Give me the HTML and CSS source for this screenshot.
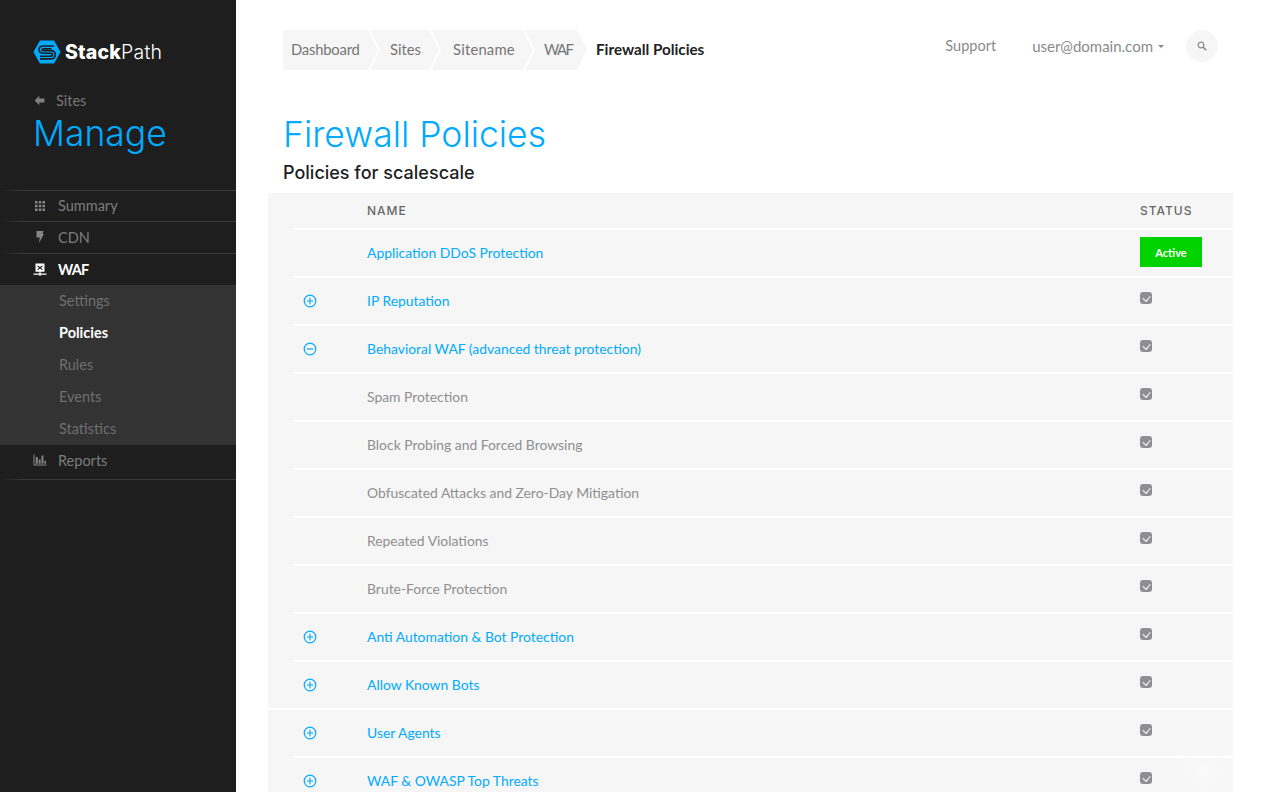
FILE: index.html
```html
<!DOCTYPE html>
<html lang="en">
<head>
<meta charset="utf-8">
<title>Firewall Policies</title>
<link rel="stylesheet" href="styles.css">
</head>
<body>
<aside class="sidebar">
  <div class="brand">
    <svg class="brand-mark" viewBox="0 0 28 24" width="28" height="24">
      <path d="M7 0.5H21L27.6 12L21 23.5H7L0.4 12Z" fill="#00aaff"/>
      <path d="M21 6H10.5C7.8 6 6 7.6 6 9.6S7.8 13.2 10.5 13.2H17.5C18.9 13.2 19.5 13.9 19.5 14.8S18.9 16.2 17.5 16.2H7" fill="none" stroke="#1e1e1e" stroke-width="1.6"/>
      <path d="M18.5 8.8H10.8C9.5 8.8 8.9 9.2 8.9 9.7S9.5 10.6 10.8 10.6H17.5C20.4 10.6 22.2 12.4 22.2 14.7S20.4 18.9 17.5 18.9H7" fill="none" stroke="#1e1e1e" stroke-width="1.6"/>
    </svg>
    <span class="brand-name"><b>Stack</b>Path</span>
  </div>
  <a class="back"><svg class="back-icon" viewBox="0 0 12 12" width="11" height="11"><path d="M5.8 0.8L0.6 6L5.8 11.2V8.2H11.4V3.8H5.8Z" fill="#808080"/></svg><span>Sites</span></a>
  <div class="section-title">Manage</div>
  <nav class="nav">
    <a class="nav-item first"><svg class="nav-icon small" viewBox="0 0 12 12" width="12" height="12"><path d="M1 1h2.5v2.5H1zM4.8 1h2.5v2.5H4.8zM8.5 1H11v2.5H8.5zM1 4.8h2.5v2.5H1zM4.8 4.8h2.5v2.5H4.8zM8.5 4.8H11v2.5H8.5zM1 8.5h2.5V11H1zM4.8 8.5h2.5V11H4.8zM8.5 8.5H11V11H8.5z" fill="#858585"/></svg><span>Summary</span></a>
    <a class="nav-item"><svg class="nav-icon small" viewBox="0 0 12 12" width="12" height="12"><path d="M2.5 0H9.5L8.5 3H10L5 12L5.8 6.5H2.5Z" fill="#858585"/></svg><span>CDN</span></a>
    <a class="nav-item active"><svg class="nav-icon" viewBox="0 0 14 14" width="14" height="14"><path fill-rule="evenodd" d="M2.5 0.5H11.5V8.8H7.6V10.6H13.5V11.7H8.2V12.6H5.8V11.7H0.5V10.6H6.4V8.8H2.5ZM5 2.4L4.2 3.2L6.1 4.7L4.2 6.2L5 7L7 5.4L9 7L9.8 6.2L7.9 4.7L9.8 3.2L9 2.4L7 4Z" fill="#fff"/></svg><span>WAF</span></a>
    <div class="subnav">
      <a class="sub-item">Settings</a>
      <a class="sub-item current">Policies</a>
      <a class="sub-item">Rules</a>
      <a class="sub-item">Events</a>
      <a class="sub-item">Statistics</a>
    </div>
    <a class="nav-item reports"><svg class="nav-icon" viewBox="0 0 14 12" width="14" height="12"><path d="M0.5 0.5H1.5V10.5H13.5V11.5H0.5ZM2.7 3H4.8V9.8H2.7ZM5.7 5.5H7.6V9.8H5.7ZM8.5 1.5H10.4V9.8H8.5ZM11.3 6.8H13V9.8H11.3Z" fill="#858585"/></svg><span>Reports</span></a>
  </nav>
</aside>
<main class="main">
  <header class="topbar">
    <ol class="crumbs">
      <li class="crumb first">Dashboard</li>
      <li class="crumb second">Sites</li>
      <li class="crumb third">Sitename</li>
      <li class="crumb fourth">WAF</li>
      <li class="crumb-current">Firewall Policies</li>
    </ol>
    <div class="top-links">
      <a class="top-link">Support</a>
      <a class="top-link user">user@domain.com<i class="caret"></i></a>
      <button class="search" type="button" aria-label="Search"><svg viewBox="0 0 10 10" width="10" height="10"><circle cx="4" cy="4" r="2.8" fill="none" stroke="#888" stroke-width="1.2"/><path d="M6 6L9.2 9.2" stroke="#888" stroke-width="1.6"/></svg></button>
    </div>
  </header>
  <h1 class="page-title">Firewall Policies</h1>
  <h2 class="page-sub">Policies for scalescale</h2>
  <section class="table">
    <div class="row head"><span></span><span class="th">NAME</span><span class="th">STATUS</span></div>
    <div class="row"><span></span><a class="name">Application DDoS Protection</a><span class="badge">Active</span></div>
    <div class="row"><svg class="toggle" viewBox="0 0 14 14" width="14" height="14"><circle cx="7" cy="7" r="5.8"/><path d="M3.8 7H10.2M7 3.8V10.2"/></svg><a class="name">IP Reputation</a><i class="check"></i></div>
    <div class="row"><svg class="toggle" viewBox="0 0 14 14" width="14" height="14"><circle cx="7" cy="7" r="5.8"/><path d="M3.8 7H10.2"/></svg><a class="name">Behavioral WAF (advanced threat protection)</a><i class="check"></i></div>
    <div class="row"><span></span><span class="name muted">Spam Protection</span><i class="check"></i></div>
    <div class="row"><span></span><span class="name muted">Block Probing and Forced Browsing</span><i class="check"></i></div>
    <div class="row"><span></span><span class="name muted">Obfuscated Attacks and Zero-Day Mitigation</span><i class="check"></i></div>
    <div class="row"><span></span><span class="name muted">Repeated Violations</span><i class="check"></i></div>
    <div class="row"><span></span><span class="name muted">Brute-Force Protection</span><i class="check"></i></div>
    <div class="row"><svg class="toggle" viewBox="0 0 14 14" width="14" height="14"><circle cx="7" cy="7" r="5.8"/><path d="M3.8 7H10.2M7 3.8V10.2"/></svg><a class="name">Anti Automation &amp; Bot Protection</a><i class="check"></i></div>
    <div class="row full"><svg class="toggle" viewBox="0 0 14 14" width="14" height="14"><circle cx="7" cy="7" r="5.8"/><path d="M3.8 7H10.2M7 3.8V10.2"/></svg><a class="name">Allow Known Bots</a><i class="check"></i></div>
    <div class="row"><svg class="toggle" viewBox="0 0 14 14" width="14" height="14"><circle cx="7" cy="7" r="5.8"/><path d="M3.8 7H10.2M7 3.8V10.2"/></svg><a class="name">User Agents</a><i class="check"></i></div>
    <div class="row"><svg class="toggle" viewBox="0 0 14 14" width="14" height="14"><circle cx="7" cy="7" r="5.8"/><path d="M3.8 7H10.2M7 3.8V10.2"/></svg><a class="name">WAF &amp; OWASP Top Threats</a><i class="check"></i></div>
  </section>
</main>
</body>
</html>
```
FILE: styles.css
```css
* { box-sizing: border-box; }
html, body { height: 100%; }
body {
  margin: 0;
  display: flex;
  height: 792px;
  overflow: hidden;
  background: #fff;
  font-family: Lato, "Noto Sans", sans-serif;
  font-size: 14.5px;
  color: #808080;
}
a { color: inherit; text-decoration: none; }

.sidebar { width: 236px; flex: none; background: #1e1e1e; padding-top: 40px; }
.brand { display: flex; align-items: center; gap: 4px; margin-left: 33px; height: 24px; }
.brand-name { font-family: Inter, sans-serif; font-size: 19.5px; font-weight: 300; color: #fff; letter-spacing: 0.2px; }
.brand-name b { font-weight: 800; }
.back { display: flex; align-items: center; margin: 26px 0 0 34px; height: 20px; color: #777; }
.back-icon { margin-right: 11px; }
.section-title { margin: 2px 0 0 33px; font-family: Inter, sans-serif; font-weight: 300; font-size: 35.5px; line-height: 44px; color: #00aaff; }
.nav { margin-top: 34px; }
.nav-item {
  display: grid; grid-template-columns: 25px 1fr; align-items: center; height: 32px; padding-left: 33px; color: #7c7c7c;
  background: linear-gradient(90deg, #1e1e1e 0, #3a3a3a 24px) top / 100% 1px no-repeat;
}
.nav-item.first { height: 31px; }
.nav-item.active { color: #fff; font-weight: 700; padding-top: 1px; letter-spacing: -0.8px; }
.nav-icon.small { margin-left: 1px; }
.subnav { background: #333; }
.sub-item { display: block; height: 32px; line-height: 32px; padding-left: 59px; color: #6f6f6f; }
.sub-item.current { color: #fff; font-weight: 700; }
.reports { height: 35px; padding-bottom: 5px; background: linear-gradient(90deg, #1e1e1e 0, #3a3a3a 24px) bottom / 100% 1px no-repeat; }

.main { flex: 1; min-width: 0; padding: 30px 29px 0 32px; }
.topbar { display: flex; justify-content: space-between; margin: 0 15px 0 15px; height: 40px; }
.crumbs { display: flex; list-style: none; margin: 0; padding: 0; align-items: center; font-size: 14.8px; }
.crumb {
  display: flex; align-items: center; height: 40px; margin-right: -8px; padding: 0 0 2px 20px;
  background: #f6f6f6; color: #757575;
  clip-path: polygon(0 0, calc(100% - 10px) 0, 100% 50%, calc(100% - 10px) 100%, 0 100%, 10px 50%);
}
.crumb.first { width: 95px; padding-left: 8px; letter-spacing: -0.2px; clip-path: polygon(0 0, calc(100% - 10px) 0, 100% 50%, calc(100% - 10px) 100%, 0 100%); }
.crumb.second { width: 69px; padding-left: 20px; }
.crumb.third { width: 102px; padding-left: 22px; letter-spacing: 0.2px; }
.crumb.fourth { width: 62px; padding-left: 19px; letter-spacing: -1.6px; }
.crumb-current { margin-left: 17px; padding-bottom: 2px; font-size: 15.2px; font-weight: 700; color: #222; }
.top-links { display: flex; align-items: flex-start; }
.top-link { line-height: 32px; color: #8a8a8a; }
.user { margin-left: 36px; display: flex; align-items: center; font-size: 15px; }
.caret { margin-left: 5px; border: 3px solid transparent; border-top: 3px solid #888; border-bottom: 0; width: 0; height: 0; margin-top: 1px; }
.search { margin: 0 0 0 22px; padding: 0; width: 32px; height: 32px; border: 0; border-radius: 50%; background: #f6f6f6; display: flex; align-items: center; justify-content: center; }
.page-title { margin: 43px 0 0 15px; font-family: Inter, sans-serif; font-size: 35.5px; line-height: 44px; font-weight: 300; color: #00aaff; }
.page-sub { margin: 4px 0 0 15px; font-family: Inter, sans-serif; font-size: 18px; line-height: 24px; font-weight: 500; color: #1e1e1e; }

.table { position: relative; margin-top: 8px; background: #f6f6f6; }
.table::after { content: ""; position: absolute; right: 0; bottom: 0; width: 60px; height: 70px; background: radial-gradient(circle at 50% 50%, rgba(255,255,255,.35), rgba(255,255,255,0) 70%); }
.row {
  display: grid; grid-template-columns: 74px 1fr 93px; align-items: center;
  height: 48px; margin-left: 25px; border-bottom: 2px solid #fff;
}
.row.head { height: 37px; }
.row.full { margin-left: 0; padding-left: 25px; }
.th { font-family: Inter, sans-serif; font-size: 12px; font-weight: 500; letter-spacing: 1px; color: #666; }
.name { margin-top: -2px; font-size: 13.9px; color: #00aaff; }
.name.muted { color: #8f8f8f; }
.toggle { margin-left: 10px; fill: none; stroke: #00aaff; stroke-width: 1.2; }
.badge { width: 62px; height: 30px; margin-top: -2px; background: #00d200; color: #fff; font-size: 11px; font-weight: 700; display: flex; align-items: center; justify-content: center; }
.check { display: block; position: relative; width: 12px; height: 12px; margin-top: -6px; border-radius: 3px; background: #8e8e93; }
.check::after { content: ""; position: absolute; left: 3.8px; top: 2px; width: 3.6px; height: 6.4px; border: solid #fff; border-width: 0 1.5px 1.5px 0; transform: rotate(40deg); }
```
